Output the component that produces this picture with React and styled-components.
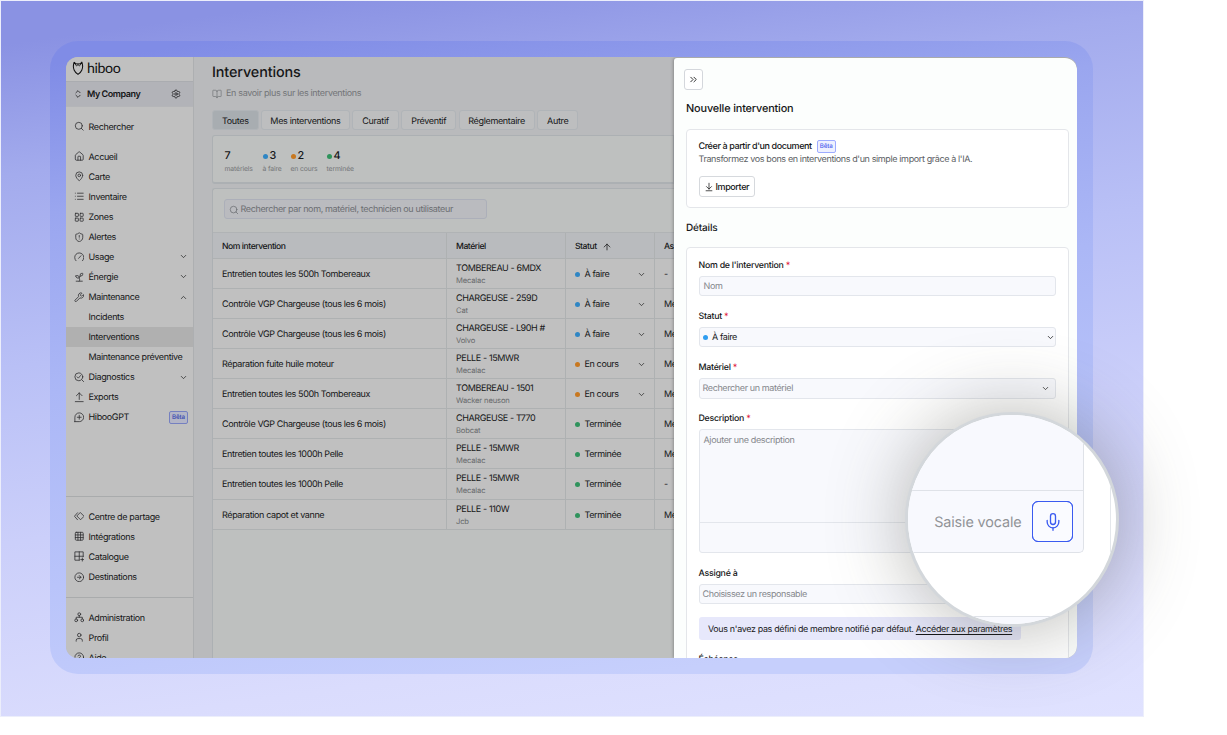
import {Fragment} from "react";
import styled, {createGlobalStyle} from 'styled-components'
import {
    ArrowDownToLine, ArrowUp, BookOpen, ChevronDown, ChevronUp, ChevronsRight, ChevronsUpDown,
    CircleArrowRight, CircleHelp, Grid3x3, House, LayoutGrid, List, MapPin,
    Mic, Search, Settings, ShieldAlert, Sprout, User, Wrench
} from 'lucide-react'

const GlobalStyle = createGlobalStyle`
  *{
    box-sizing: border-box;
  }
  body{
    margin: 0;
    background: #fff;
    font-family: Inter, "Liberation Sans", sans-serif;
    text-rendering: geometricPrecision;
    color: #151617;
  }
  h1, h2, h3, p{
    margin: 0;
    font-weight: 500;
  }
  svg{
    display: block;
    flex: none;
  }
`

const Page = styled.div`
  position: relative;
  width: 1227px;
  height: 735px;
  overflow: hidden;
  background: #fff;
`

const Backdrop = styled.div`
  width: 1144px;
  height: 717px;
  padding: 40px 0 0 49px;
  border: 1px solid #eceefb;
  background: linear-gradient(172deg, #8a92e3 5%, #a3abed 20%, #b9c0f6 42%, #cbcffa 62%, #dadcfd 84%, #e0e2ff 100%);
`

const Frame = styled.div`
  width: 1043px;
  height: 633px;
  padding: 16px;
  border-radius: 28px;
  background: linear-gradient(172deg, #808ce6 3%, #9aa6ef 22%, #abb7f6 45%, #b9c4fa 70%, #c6cffc 92%);
`

const Window = styled.div`
  display: flex;
  width: 1011px;
  height: 601px;
  overflow: hidden;
  border-radius: 12px;
  background: #b9babc;
`

/* sidebar */

const Sidebar = styled.aside`
  flex: none;
  display: flex;
  flex-direction: column;
  width: 128px;
  background: #c0c0c0;
  border-right: 1px solid #adafb1;
`

const Logo = styled.div`
  display: flex;
  align-items: center;
  flex: none;
  height: 24px;
  padding: 0 0 2px 6px;
  gap: 3px;
  font-family: Lato, sans-serif;
  font-size: 14.2px;
  letter-spacing: -.4px;
  color: #111;
`

const Company = styled.div`
  display: flex;
  align-items: center;
  flex: none;
  height: 26px;
  padding: 0 12px 0 7px;
  gap: 4px;
  background: #b2b3b8;
  border-top: 1px solid #aaacb0;
  border-bottom: 1px solid #b4b5b8;
  font-size: 9px;
  font-weight: 600;
  letter-spacing: -.44px;
  span{
    flex: 1;
    padding-top: 1px;
  }
`

const NavGroup = styled.nav`
  flex: none;
  padding-top: ${p => p.$top || 0}px;
  ${p => p.$line && 'border-top: 1px solid #a9abac;'}
`

const NavLink = styled.div`
  display: flex;
  align-items: center;
  height: 20.07px;
  padding: 0 5px 0 7.5px;
  font-size: 9px;
  letter-spacing: -.36px;
  white-space: nowrap;
  background: ${p => p.$active ? '#b0b0b0' : 'transparent'};
  span{
    flex: 1;
    padding-top: 1px;
    margin-left: ${p => p.$sub ? 15 : 4.5}px;
  }
`

const Spacer = styled.div`
  height: ${p => p.$h}px;
  flex: none;
`

const Beta = styled.b`
  display: inline-flex;
  align-items: center;
  justify-content: center;
  width: 19px;
  height: 13px;
  border: 1px solid ${p => p.$dim ? '#7580c0' : '#9dabff'};
  border-radius: 2px;
  background: ${p => p.$dim ? '#b3b5c6' : '#eef0ff'};
  color: ${p => p.$dim ? '#3547b0' : '#4e62ee'};
  font-size: 6.2px;
  font-weight: 500;
  letter-spacing: -.1px;
`

/* list of interventions */

const Main = styled.main`
  flex: none;
  width: 480px;
  padding: 7px 0 0 18px;
`

const Title = styled.h1`
  font-size: 14.4px;
  line-height: 18px;
  letter-spacing: -.12px;
`

const Learn = styled.div`
  display: flex;
  align-items: center;
  gap: 4px;
  height: 13px;
  margin-top: 5px;
  font-size: 9px;
  letter-spacing: -.34px;
  color: #737578;
`

const Tabs = styled.div`
  display: flex;
  gap: 2.4px;
  margin-top: 10px;
`

const Tab = styled.div`
  display: flex;
  align-items: center;
  justify-content: center;
  width: ${p => p.$w}px;
  height: 20px;
  padding-top: 2px;
  border: 1px solid #b0b4b8;
  border-radius: 3px;
  background: ${p => p.$active ? '#a8adb1' : '#bdbebf'};
  font-size: 9px;
  letter-spacing: -.34px;
`

const Stats = styled.section`
  display: flex;
  height: 49px;
  margin-top: 5px;
  padding: 13px 0 0 11.5px;
  background: #bec0bf;
  border: 1px solid #acb0b3;
  border-bottom-width: 2px;
  border-radius: 3px 0 0 3px;
`

const Stat = styled.div`
  width: ${p => p.$w}px;
  font-size: 6.8px;
  letter-spacing: -.12px;
  line-height: 10px;
  color: #737577;
  white-space: nowrap;
  strong{
    display: flex;
    align-items: center;
    gap: 2px;
    height: 14px;
    margin-bottom: 1px;
    font-size: 10.8px;
    font-weight: 500;
    color: #151617;
  }
`

const dots = {blue: '#2f86c4', orange: '#c87820', green: '#2f935c', bright: '#2f9df0'}

const Dot = styled.i`
  flex: none;
  width: 5px;
  height: 5px;
  border-radius: 50%;
  background: ${p => dots[p.$tone]};
`

const TableCard = styled.section`
  height: 480px;
  margin-top: 4px;
  background: #bec0bf;
  border: 1px solid #acb0b3;
  border-right: 0;
  border-radius: 3px 0 0 0;
`

const SearchBox = styled.div`
  display: flex;
  align-items: center;
  gap: 1.5px;
  width: 263px;
  height: 20px;
  margin: 10px 0 13px 10.5px;
  padding: 1px 0 0 4.5px;
  border: 1px solid #acafb9;
  border-radius: 3px;
  background: #babbbf;
  color: #6c6e72;
  font-size: 9px;
  letter-spacing: -.36px;
`

const Row = styled.div`
  display: grid;
  grid-template-columns: 234px 119px 89px 30px;
  height: ${p => p.$head ? 27 : 30.07}px;
  background: ${p => p.$head ? '#b9bbbe' : '#c0c0c0'};
  border-top: ${p => p.$head ? '1px solid #b0b3b5' : 0};
  border-bottom: 1px solid #aeb1b2;
  font-size: ${p => p.$head ? 8.6 : 9}px;
  font-weight: ${p => p.$head ? 500 : 400};
  letter-spacing: ${p => p.$head ? -.45 : -.38}px;
`

const Cell = styled.div`
  display: flex;
  align-items: center;
  gap: ${p => p.$gap || 0}px;
  padding: 2px 8px 0 9px;
  border-right: 1px solid #aeb1b2;
  white-space: nowrap;
  overflow: hidden;
  &:last-child{
    border: 0;
    padding-right: 0;
  }
`

const Machine = styled.div`
  padding-top: 1px;
  line-height: 11px;
  small{
    display: block;
    padding-top: 1px;
    font-size: 7.6px;
    letter-spacing: -.15px;
    line-height: 12px;
    color: #686a6c;
  }
`

const Grow = styled.span`
  flex: 1;
`

/* form panel */

const Panel = styled.section`
  flex: none;
  width: 403px;
  height: 600px;
  margin-top: 1px;
  padding: 11px 8px 0 12px;
  overflow: hidden;
  background: #fcfefd;
  border-radius: 3px 12px 0 0;
  box-shadow: -1px 0 3px rgba(0, 0, 0, .25);
`

const Collapse = styled.button`
  display: flex;
  align-items: center;
  justify-content: center;
  width: 19px;
  height: 21px;
  margin-left: -2px;
  padding: 0;
  border: 1px solid #d4d7dc;
  border-radius: 3px;
  background: #fff;
  color: #222;
`

const PanelTitle = styled.h2`
  height: 14px;
  margin: ${p => p.$m};
  font-size: ${p => p.$size}px;
  line-height: 14px;
  letter-spacing: -.16px;
`

const Card = styled.div`
  width: 383px;
  padding: ${p => p.$pad};
  border: 1px solid #e4e6ea;
  border-radius: 4px;
  background: #fff;
`

const DocTitle = styled.h3`
  display: flex;
  align-items: center;
  gap: 5px;
  height: 13px;
  font-size: 9px;
  letter-spacing: -.4px;
`

const DocText = styled.p`
  height: 12px;
  padding-top: 1px;
  font-size: 9px;
  font-weight: 400;
  line-height: 12px;
  letter-spacing: -.38px;
  color: #5b5e63;
`

const ImportButton = styled.button`
  display: flex;
  align-items: center;
  gap: 2px;
  width: 56px;
  height: 21px;
  margin-top: 11px;
  padding: 0 4px;
  border: 1px solid #d6d9dd;
  border-radius: 3px;
  background: #fff;
  color: #151617;
  font: 500 9px Inter, sans-serif;
  letter-spacing: -.4px;
`

const Label = styled.div`
  height: 12px;
  margin-top: ${p => p.$top || 0}px;
  padding-top: 1px;
  font-size: 8.8px;
  font-weight: 500;
  line-height: 12px;
  letter-spacing: -.25px;
  em{
    font-style: normal;
    color: #e0243f;
  }
`

const Field = styled.div`
  display: flex;
  align-items: center;
  gap: 4.5px;
  width: 357.5px;
  height: ${p => p.$h || 20}px;
  margin-top: 5px;
  padding: ${p => p.$h ? 0 : 1}px ${p => p.$right || 0}px 0 ${p => p.$left || 3}px;
  border: 1px solid #e3e6ec;
  border-radius: 3px;
  background: #f8f9fd;
  font-size: 9px;
  letter-spacing: -.38px;
  color: ${p => p.$filled ? '#151617' : '#85878c'};
`

const TextArea = styled.div`
  width: 357.5px;
  height: 124px;
  margin-top: 5px;
  border: 1px solid #e3e6ec;
  border-radius: 3px;
  background: #f8f9fd;
  font-size: 9px;
  letter-spacing: -.36px;
  color: #85878c;
  p{
    height: 93px;
    padding: 5px 4px 4px;
    border-bottom: 1px solid #e3e6ec;
    line-height: 12px;
    font-weight: 400;
  }
`

const Notice = styled.div`
  display: flex;
  align-items: center;
  width: 322.5px;
  height: 23px;
  margin-top: 13px;
  padding: 2px 0 0 9.5px;
  border-radius: 3px;
  background: #e7e8fb;
  font-size: 8.9px;
  letter-spacing: -.31px;
  white-space: pre;
  u{
    text-underline-offset: 2px;
    text-decoration-thickness: 1px;
  }
`

/* magnifier, lies over the panel corner */

const Lens = styled.div`
  position: absolute;
  left: 905px;
  top: 412px;
  width: 214px;
  height: 215px;
  overflow: hidden;
  border: 3px solid #d3d7db;
  border-radius: 50%;
  background: #fff;
`

const LensShadow = styled.div`
  position: absolute;
  left: 908px;
  top: 414px;
  width: 209px;
  height: 211px;
  border-radius: 50%;
  box-shadow: 0 0 80px rgba(70, 70, 60, .42);
`

const LensBox = styled.div`
  width: 176px;
  height: 138px;
  border: 1px solid #dfe2e8;
  border-width: 0 1px 1px 0;
  border-radius: 0 0 5px 0;
  background: #f8f9fe;
`

const LensBlank = styled.div`
  height: 76px;
  border-bottom: 1px solid #dfe2e8;
`

const LensBar = styled.div`
  display: flex;
  align-items: center;
  justify-content: flex-end;
  gap: 10.5px;
  height: 61px;
  padding-right: 10px;
  font-size: 14.4px;
  letter-spacing: -.14px;
  color: #919397;
  span{
    padding-top: 1px;
  }
`

const LensRow = styled.div`
  display: flex;
`

const LensGap = styled.div`
  width: 27px;
  border-right: 1px solid #e4e7eb;
`

const LensField = styled.div`
  height: 20px;
  margin-top: 63px;
  border-top: 1px solid #dfe2e8;
  background: #f8f9fe;
`

const MicButton = styled.button`
  display: flex;
  align-items: center;
  justify-content: center;
  width: 41px;
  height: 41px;
  padding: 0;
  border: 1.4px solid #3b5bf0;
  outline: .4px solid #3b5bf0;
  outline-offset: -1px;
  border-radius: 6px;
  background: #fafbff;
  color: #3b5bf0;
`

const icon = {size: 10.5, strokeWidth: 1.8, color: '#2c2d2f'}

const Svg = ({children}) => (
    <svg width="10.5" height="10.5" viewBox="0 0 24 24" fill="none" stroke="#2c2d2f" strokeWidth="1.8"
         strokeLinecap="round" strokeLinejoin="round">{children}</svg>
)

const OwlIcon = () => (
    <svg width="12" height="14.5" viewBox="0 0 12 15" fill="none" stroke="#111" strokeWidth="1.1" strokeLinejoin="round">
        <path d="M2 1.2C1 4 .9 7 2.1 9.5C3 11.5 4.6 12.9 6 13.8C7.4 12.9 9 11.5 9.9 9.5C11.1 7 11 4 10 1.2L7.9 3.4M2 1.2L4.1 3.4"/>
        <path d="M3.3 3.2C3.6 5.4 5.5 5.4 6 3.4C6.5 5.4 8.4 5.4 8.7 3.2M4 2.9H8" strokeWidth=".9"/>
    </svg>
)

const DiagnosticIcon = () => (
    <Svg>
        <circle cx="11" cy="11" r="9"/>
        <path d="m18 18 4 4M7 11l3 3 5-6"/>
    </Svg>
)

const GaugeIcon = () => <Svg><path d="M4.5 20A10.5 10.5 0 1 1 19.5 20M10.5 14.5l5.5-6"/></Svg>

const ExportIcon = () => <Svg><path d="M12 17V2M5.5 8.5 12 2l6.5 6.5M3 22h18"/></Svg>

const ChatPlusIcon = () => (
    <Svg>
        <path d="M2 22V12a10 10 0 1 1 10 10H2Z"/>
        <path d="M12 7.5v9M7.5 12h9"/>
    </Svg>
)

const ShareIcon = () => (
    <Svg>
        <path d="m8 4-7 8 7 8M15 4l8 8-8 8-8-8Z"/>
    </Svg>
)

const CatalogIcon = () => (
    <Svg>
        <path d="M21 13V2H2v19h10M12 2v19M2 12h19M19 16v7M15.5 19.5h7"/>
    </Svg>
)

const OrgIcon = () => (
    <Svg>
        <circle cx="12" cy="5" r="3.2"/>
        <circle cx="5" cy="19" r="3.2"/>
        <circle cx="19" cy="19" r="3.2"/>
        <path d="M12 8.2V12M5 15.8V12h14v3.8"/>
    </Svg>
)

const navMain = [
    {name: 'Accueil', ico: <House {...icon}/>},
    {name: 'Carte', ico: <MapPin {...icon}/>},
    {name: 'Inventaire', ico: <List {...icon}/>},
    {name: 'Zones', ico: <LayoutGrid {...icon}/>},
    {name: 'Alertes', ico: <ShieldAlert {...icon}/>},
    {name: 'Usage', ico: <GaugeIcon/>, arrow: 'down'},
    {name: 'Énergie', ico: <Sprout {...icon}/>, arrow: 'down'},
    {name: 'Maintenance', ico: <Wrench {...icon}/>, arrow: 'up'},
    {name: 'Incidents', sub: true},
    {name: 'Interventions', sub: true, active: true},
    {name: 'Maintenance préventive', sub: true},
    {name: 'Diagnostics', ico: <DiagnosticIcon/>, arrow: 'down'},
    {name: 'Exports', ico: <ExportIcon/>},
    {name: 'HibooGPT', ico: <ChatPlusIcon/>, beta: true},
]

const navShare = [
    {name: 'Centre de partage', ico: <ShareIcon/>},
    {name: 'Intégrations', ico: <Grid3x3 {...icon}/>},
    {name: 'Catalogue', ico: <CatalogIcon/>},
    {name: 'Destinations', ico: <CircleArrowRight {...icon}/>},
]

const navUser = [
    {name: 'Administration', ico: <OrgIcon/>},
    {name: 'Profil', ico: <User {...icon}/>},
    {name: 'Aide', ico: <CircleHelp {...icon}/>},
]

const tabs = [['Toutes', 46.5], ['Mes interventions', 89], ['Curatif', 46.5], ['Préventif', 55], ['Réglementaire', 76], ['Autre', 41.5]]

const rows = [
    ['Entretien toutes les 500h Tombereaux', 'TOMBEREAU - 6MDX', 'Mecalac', 'À faire', '-'],
    ['Contrôle VGP Chargeuse (tous les 6 mois)', 'CHARGEUSE - 259D', 'Cat', 'À faire', 'Me'],
    ['Contrôle VGP Chargeuse (tous les 6 mois)', 'CHARGEUSE - L90H #', 'Volvo', 'À faire', 'Me'],
    ['Réparation fuite huile moteur', 'PELLE - 15MWR', 'Mecalac', 'En cours', 'Me'],
    ['Entretien toutes les 500h Tombereaux', 'TOMBEREAU - 1501', 'Wacker neuson', 'En cours', 'Me'],
    ['Contrôle VGP Chargeuse (tous les 6 mois)', 'CHARGEUSE - T770', 'Bobcat', 'Terminée', 'Me'],
    ['Entretien toutes les 1000h Pelle', 'PELLE - 15MWR', 'Mecalac', 'Terminée', 'Me'],
    ['Entretien toutes les 1000h Pelle', 'PELLE - 15MWR', 'Mecalac', 'Terminée', '-'],
    ['Réparation capot et vanne', 'PELLE - 110W', 'Jcb', 'Terminée', 'Me'],
]

const tones = {'À faire': 'blue', 'En cours': 'orange', 'Terminée': 'green'}

const NavItem = ({item}) => (
    <NavLink $sub={item.sub} $active={item.active}>
        {item.ico}
        <span>{item.name}</span>
        {item.arrow === 'down' && <ChevronDown size={9} strokeWidth={1.8}/>}
        {item.arrow === 'up' && <ChevronUp size={9} strokeWidth={1.8}/>}
        {item.beta && <Beta $dim>Bêta</Beta>}
    </NavLink>
)

const Menu = () => (
    <Sidebar>
        <Logo><OwlIcon/>hiboo</Logo>
        <Company>
            <ChevronsUpDown size={10} strokeWidth={1.8}/>
            <span>My Company</span>
            <Settings size={10} strokeWidth={1.8}/>
        </Company>
        <NavGroup $top={9.5}>
            <NavItem item={{name: 'Rechercher', ico: <Search {...icon}/>}}/>
        </NavGroup>
        <NavGroup $top={10}>
            {navMain.map(item => <NavItem item={item} key={item.name}/>)}
        </NavGroup>
        <Spacer $h={68.5}/>
        <NavGroup $top={9.6} $line>
            {navShare.map(item => <NavItem item={item} key={item.name}/>)}
        </NavGroup>
        <Spacer $h={10.2}/>
        <NavGroup $top={9.6} $line>
            {navUser.map(item => <NavItem item={item} key={item.name}/>)}
        </NavGroup>
    </Sidebar>
)

const Interventions = () => (
    <Main>
        <Title>Interventions</Title>
        <Learn><BookOpen size={10} strokeWidth={1.7}/>En savoir plus sur les interventions</Learn>
        <Tabs>
            {tabs.map(([name, w], i) => <Tab $w={w} $active={i === 0} key={name}>{name}</Tab>)}
        </Tabs>
        <Stats>
            <Stat $w={38}><strong>7</strong>matériels</Stat>
            <Stat $w={28}><strong><Dot $tone="blue"/>3</strong>à faire</Stat>
            <Stat $w={36}><strong><Dot $tone="orange"/>2</strong>en cours</Stat>
            <Stat $w={36}><strong><Dot $tone="green"/>4</strong>terminée</Stat>
        </Stats>
        <TableCard>
            <SearchBox><Search size={10} strokeWidth={1.8}/>Rechercher par nom, matériel, technicien ou utilisateur</SearchBox>
            <Row $head>
                <Cell>Nom intervention</Cell>
                <Cell>Matériel</Cell>
                <Cell $gap={5}>Statut <ArrowUp size={10} strokeWidth={1.8}/></Cell>
                <Cell>As</Cell>
            </Row>
            {rows.map(([name, machine, brand, status, who], i) => (
                <Row key={i}>
                    <Cell>{name}</Cell>
                    <Cell><Machine>{machine}<small>{brand}</small></Machine></Cell>
                    <Cell $gap={4.5}>
                        <Dot $tone={tones[status]}/>
                        <Grow>{status}</Grow>
                        {status !== 'Terminée' && <ChevronDown size={9} strokeWidth={1.8}/>}
                    </Cell>
                    <Cell>{who}</Cell>
                </Row>
            ))}
        </TableCard>
    </Main>
)

const Form = () => (
    <Panel>
        <Collapse><ChevronsRight size={11} strokeWidth={2}/></Collapse>
        <PanelTitle $size={10.9} $m="11px 0 14px">Nouvelle intervention</PanelTitle>
        <Card $pad="10px 11.5px 10px">
            <DocTitle>Créer à partir d'un document <Beta>Bêta</Beta></DocTitle>
            <DocText>Transformez vos bons en interventions d'un simple import grâce à l'IA.</DocText>
            <ImportButton><ArrowDownToLine size={10} strokeWidth={1.8}/>Importer</ImportButton>
        </Card>
        <PanelTitle $size={10} $m="12.5px 0 12.5px">Détails</PanelTitle>
        <Card $pad="11px 11.5px 30px">
            <Label>Nom de l'intervention <em>*</em></Label>
            <Field $left={4}>Nom</Field>
            <Label $top={14}>Statut <em>*</em></Label>
            <Field $filled><Dot $tone="bright"/><Grow>À faire</Grow><ChevronDown size={9} strokeWidth={2}/></Field>
            <Label $top={14}>Matériel <em>*</em></Label>
            <Field $h={21} $right={5}><Grow>Rechercher un matériel</Grow><ChevronDown size={9} strokeWidth={2} color="#222"/></Field>
            <Label $top={12.5}>Description <em>*</em></Label>
            <TextArea><p>Ajouter une description</p></TextArea>
            <Label $top={14}>Assigné à</Label>
            <Field>Choisissez un responsable</Field>
            <Notice>Vous n'avez pas défini de membre notifié par défaut. <u>Accéder aux paramètres</u></Notice>
            <Label $top={13}>Échéance</Label>
        </Card>
    </Panel>
)

const Magnifier = () => (
    <Fragment>
        <LensShadow/>
        <Lens>
            <LensRow>
                <LensBox>
                    <LensBlank/>
                    <LensBar>
                        <span>Saisie vocale</span>
                        <MicButton><Mic size={20} strokeWidth={1.6}/></MicButton>
                    </LensBar>
                </LensBox>
                <LensGap/>
            </LensRow>
            <LensField/>
        </Lens>
    </Fragment>
)

const App = () => {
    return (
        <Fragment>
            <GlobalStyle/>
            <Page>
                <Backdrop>
                    <Frame>
                        <Window>
                            <Menu/>
                            <Interventions/>
                            <Form/>
                        </Window>
                    </Frame>
                </Backdrop>
                <Magnifier/>
            </Page>
        </Fragment>
    )
}

export default App
